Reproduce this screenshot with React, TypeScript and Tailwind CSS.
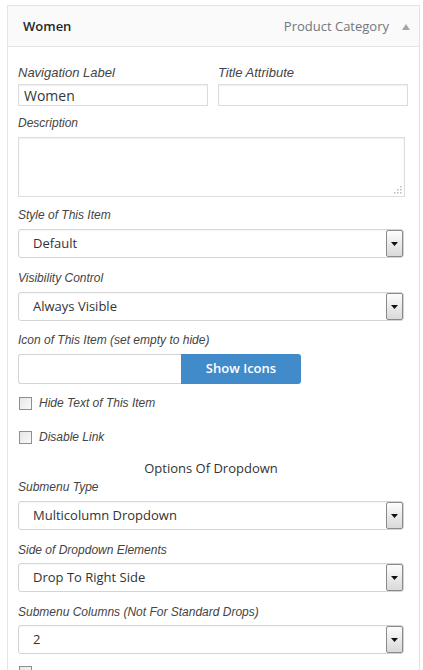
import React from "react";

const label = "block italic text-[12px] leading-[14px] text-[#444] [font-family:'Liberation_Sans',Arial,sans-serif]";
const openSans = "[font-family:'Open_Sans',sans-serif]";

function Select({ value, top }: { value: string; top: string }) {
  return (
    <div
      className={`${top} relative flex h-[29px] w-[386px] items-center rounded-[3px] border border-[#d4d4d4] bg-white shadow-[inset_0_1px_2px_rgba(0,0,0,0.04)]`}
    >
      <span className={`${openSans} pl-[14px] text-[13px] text-[#333]`}>{value}</span>
      <div className="absolute right-[0px] top-[0px] flex h-[27px] w-[17px] items-center justify-center rounded-[2px] border border-[#8a8a8a] bg-gradient-to-b from-[#fdfdfd] to-[#d9d9d9]">
        <svg width="7" height="4" viewBox="0 0 7 4">
          <path d="M0 0 L7 0 L3.5 4 Z" fill="#111" />
        </svg>
      </div>
    </div>
  );
}

function Checkbox({ text, top }: { text: string; top: string }) {
  return (
    <div className={`${top} flex items-center`}>
      <div className="ml-[1px] h-[13px] w-[13px] border border-[#8f8f8f] bg-gradient-to-br from-[#e6e6e6] to-[#fafafa]" />
      <span className="ml-[7px] italic text-[12px] leading-[14px] text-[#444] [font-family:'Liberation_Sans',Arial,sans-serif]">
        {text}
      </span>
    </div>
  );
}

export default function App() {
  return (
    <div className="h-[670px] w-[423px] overflow-hidden bg-white pt-[5px]">
      <div className="ml-[7px] w-[413px] border border-b-0 border-[#e3e3e3]">
        <div className="flex h-[41px] items-center justify-between border-b border-[#e3e3e3] bg-[#fafafa] pl-[15px] pr-[9px] pt-[1px]">
          <span className={`${openSans} text-[13px] font-semibold text-[#23282d]`}>Women</span>
          <div className="flex items-center">
            <span className={`${openSans} text-[13px] text-[#72777c]`}>Product Category</span>
            <svg className="ml-[13px]" width="8" height="6" viewBox="0 0 8 6">
              <path d="M0 6 L4 0 L8 6 Z" fill="#a3a7ab" />
            </svg>
          </div>
        </div>
        <div className="flex h-[640px] flex-col pl-[10px] pt-[18px]">
          <div className="flex">
            <div className="w-[190px]">
              <span className="block italic text-[13px] leading-[16px] text-[#444] [font-family:'Liberation_Sans',Arial,sans-serif]">
                Navigation Label
              </span>
              <div className="mt-[3px] flex h-[22px] w-[190px] items-center border border-[#ddd] shadow-[inset_0_1px_2px_rgba(0,0,0,0.07)]">
                <span className={`${openSans} pl-[5px] text-[14px] text-[#32373c]`}>Women</span>
              </div>
            </div>
            <div className="ml-[10px] w-[190px]">
              <span className="block italic text-[13px] leading-[16px] text-[#444] [font-family:'Liberation_Sans',Arial,sans-serif]">
                Title Attribute
              </span>
              <div className="mt-[3px] h-[22px] w-[190px] border border-[#ddd] shadow-[inset_0_1px_2px_rgba(0,0,0,0.07)]" />
            </div>
          </div>

          <span className={`${label} mt-[10px]`}>Description</span>
          <div className="relative mt-[7px] h-[60px] w-[387px] border border-[#ddd] shadow-[inset_0_1px_2px_rgba(0,0,0,0.07)]">
            <svg className="absolute bottom-[2px] right-[2px]" width="9" height="9" viewBox="0 0 9 9">
              <rect x="7" y="1" width="1.5" height="1.5" fill="#bbb" />
              <rect x="4" y="4" width="1.5" height="1.5" fill="#bbb" />
              <rect x="7" y="4" width="1.5" height="1.5" fill="#bbb" />
              <rect x="1" y="7" width="1.5" height="1.5" fill="#bbb" />
              <rect x="4" y="7" width="1.5" height="1.5" fill="#bbb" />
              <rect x="7" y="7" width="1.5" height="1.5" fill="#bbb" />
            </svg>
          </div>

          <span className={`${label} mt-[11px]`}>Style of This Item</span>
          <Select value="Default" top="mt-[7px]" />

          <span className={`${label} mt-[13px]`}>Visibility Control</span>
          <Select value="Always Visible" top="mt-[7px]" />

          <span className={`${label} mt-[12px]`}>Icon of This Item (set empty to hide)</span>
          <div className="mt-[7px] flex h-[30px]">
            <div className="h-[30px] w-[163px] rounded-l-[3px] border border-r-0 border-[#d4d4d4]" />
            <div
              className={`${openSans} flex h-[30px] w-[120px] items-center justify-center rounded-r-[3px] bg-[#428bca] text-[13px] font-semibold text-white`}
            >
              Show Icons
            </div>
          </div>

          <Checkbox text="Hide Text of This Item" top="mt-[12px]" />
          <Checkbox text="Disable Link" top="mt-[20px]" />

          <div className={`${openSans} mt-[15px] w-[386px] text-center text-[13px] leading-[18px] text-[#333]`}>
            Options Of Dropdown
          </div>

          <span className={`${label} mt-[3px]`}>Submenu Type</span>
          <Select value="Multicolumn Dropdown" top="mt-[7px]" />

          <span className={`${label} mt-[13px]`}>Side of Dropdown Elements</span>
          <Select value="Drop To Right Side" top="mt-[6px]" />

          <span className={`${label} mt-[13px]`}>Submenu Columns (Not For Standard Drops)</span>
          <Select value="2" top="mt-[6px]" />

          <div className="ml-[1px] mt-[12px] h-[13px] w-[13px] border border-[#8f8f8f] bg-gradient-to-br from-[#e6e6e6] to-[#fafafa]" />
        </div>
      </div>
    </div>
  );
}
